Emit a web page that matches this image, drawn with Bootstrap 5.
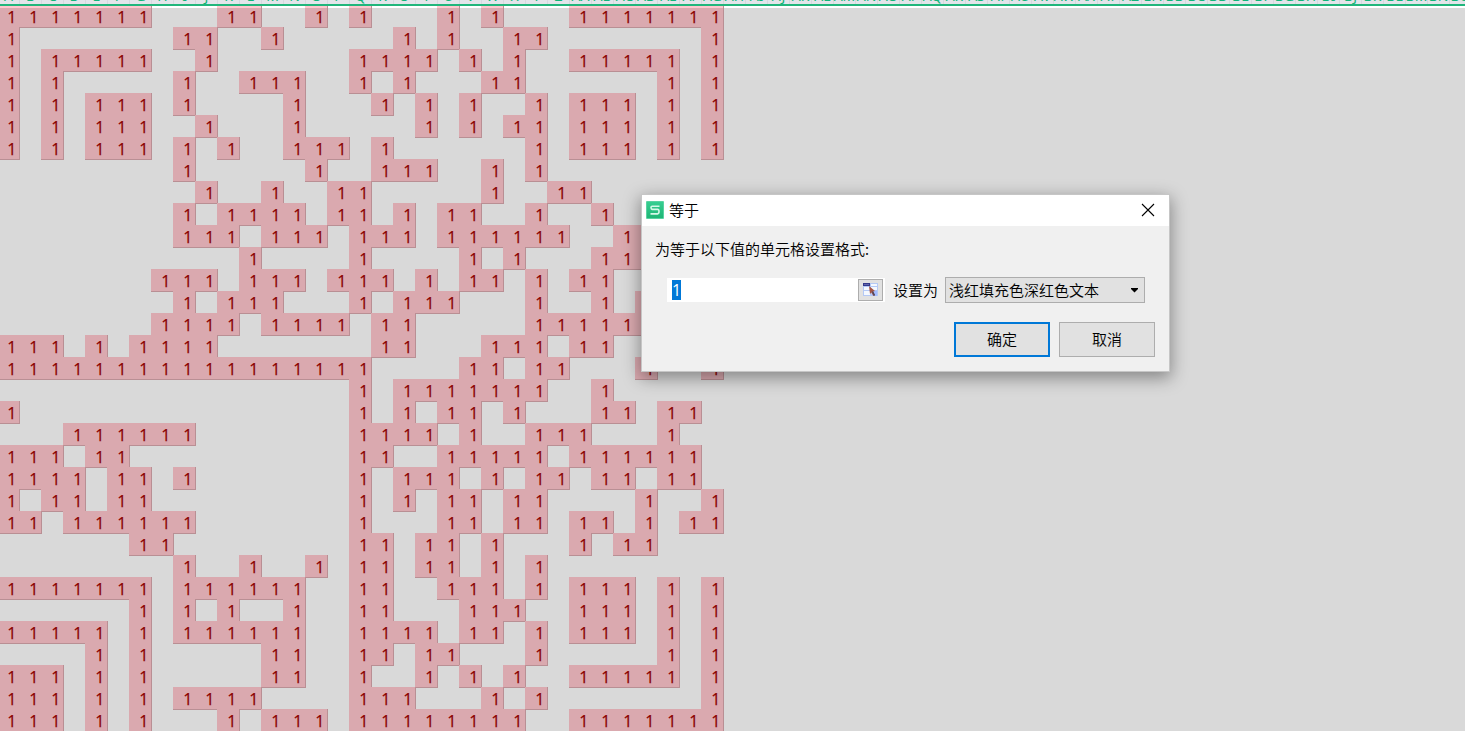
<!DOCTYPE html>
<html lang="zh-CN">
<head>
<meta charset="utf-8">
<meta name="viewport" content="width=device-width, initial-scale=1">
<title>等于</title>
<link href="https://cdn.jsdelivr.net/npm/bootstrap@5.3.0/dist/css/bootstrap.min.css" rel="stylesheet">
<style>
  body { font-family: "Noto Sans", "Noto Sans CJK SC", sans-serif; font-size: 15px; color: #000; background: #d9d9d9; }
  .col-heads { height: 6px; background: #e3e5ea; border-bottom: 2px solid #21b67c; }
  .col-heads .strip, .sheet-rows { margin-left: -2px; }
  .col-head { width: 22px; height: 4px; border-right: 1px solid #d6d9df; color: #12b57a; font-size: 14px; }
  .col-head span { line-height: 20px; margin-top: -14px; }
  .sheet-area { background: linear-gradient(#fff 2px, #d9d9d9 2px); }
  .sheet-row { height: 22px; }
  .cell-off { width: 22px; height: 22px; }
  .cell-on { width: 23px; height: 23px; margin: -1px 0 0 -1px; background: #daa9af; border: solid #b98f94; border-width: 0 1px 1px 0; color: #8b0000; line-height: 24px; padding: 0 2.5px 0 0; font-family: "Open Sans", "Noto Sans", sans-serif; font-size: 16px; -webkit-text-stroke: .25px #8b0000; }
  .sheet-row:first-child .cell-on { height: 22px; margin-top: 0; line-height: 22px; box-shadow: inset 0 2px #ffc7ce; }
  .format-dialog { left: 641px; top: 194px; width: 529px; height: 178px; background: #f0f0f0; border: 1px solid #c6c6c6; box-shadow: 0 5px 16px 1px rgba(0,0,0,.38); font-family: "Noto Sans CJK SC", sans-serif; font-weight: 350; }
  .dlg-title { height: 31px; padding: 0 14px 1px 4px; }
  .dlg-name { margin-left: 5px; }
  .dlg-label { line-height: 20px; margin: 13px 0 0 13px; }
  .value-row { height: 26px; margin: 18px 24px 0 25px; }
  .range-box { width: 218px; height: 24px; padding: 0 2px 0 5px; background: #fff; }
  .picked { background: #0078d7; color: #fff; width: 9px; height: 20px; line-height: 21px; font-family: "Open Sans", sans-serif; font-weight: 400; font-size: 16px; }
  .win-btn { background: #e1e1e1; border: 1px solid #adadad; border-radius: 0; color: #000; font-size: 15px; font-weight: 350; line-height: 1; padding: 0; }
  .pick-btn { width: 25px; height: 22px; }
  .set-as { margin: 0 7px 0 8px; line-height: 20px; }
  .format-choice { width: 200px; height: 26px; padding: 0 5px 0 3px; }
  .format-choice span { padding-bottom: 2px; }
  .act-btn { width: 96px; height: 35px; padding-bottom: 2px; }
  .act-btn.main-act { border: 2px solid #0078d7; }
  .dlg-actions { margin: 19px 14px 0 0; gap: 9px; }
</style>
<script src="https://cdn.jsdelivr.net/npm/bootstrap@5.3.0/dist/js/bootstrap.bundle.min.js"></script>
</head>
<body class="vh-100 overflow-hidden position-relative">
<div class="col-heads overflow-hidden"><div class="strip d-flex" id="heads"></div></div>
<main class="sheet-area overflow-hidden"><div class="sheet-rows" id="rows"></div></main>

<div class="format-dialog position-absolute" role="dialog" aria-label="等于">
  <div class="dlg-title bg-white d-flex align-items-center">
    <svg width="18" height="18" viewBox="0 0 18 18"><defs><linearGradient id="lg" x2="0" y2="1"><stop stop-color="#36cd91"/><stop offset="1" stop-color="#1fb575"/></linearGradient></defs><rect width="18" height="18" rx="1" fill="#59d3a2"/><rect x="1" y="1" width="16" height="16" fill="url(#lg)"/><path d="M13.5 5.2H6.2Q5 5.2 5 6.6t1.2 1.8h5.4q1.4 0 1.4 2.2t-1.4 2.3H4.5" fill="none" stroke="#d6f7e8" stroke-width="1.6"/></svg>
    <span class="dlg-name">等于</span>
    <svg class="ms-auto" width="14" height="14" viewBox="0 0 14 14"><path d="M1 1l12 12M13 1L1 13" stroke="#000" stroke-width="1.1"/></svg>
  </div>
  <div class="dlg-label">为等于以下值的单元格设置格式:</div>
  <div class="value-row d-flex align-items-center">
    <div class="range-box d-flex align-items-center justify-content-between">
      <span class="picked">1</span>
      <button class="win-btn pick-btn d-flex align-items-center justify-content-center" aria-label="选择区域">
        <svg width="15" height="14" viewBox="0 0 15 14"><rect y="0" width="15" height="13" fill="#b4c9f5"/><path d="M1 4h6v3H1zM1 8h6v4H1zM8 1h6v2H8zM8 4h6v3H8z" fill="#f4f8ff"/><path d="M9 8h5v5H9z" fill="#a5bcff"/><path d="M0 0h7v3H0z" fill="#34398b"/><path d="M1 1h5v1H1z" fill="#6368ad"/><path d="M6 3l6 5-2 .4 2 3.6-1.6 1-2-3.4L7 11z" fill="#a35445"/><path d="M9 9l2 4 1-1-2-4z" fill="#49465c"/></svg>
      </button>
    </div>
    <span class="set-as">设置为</span>
    <div class="win-btn format-choice d-flex align-items-center justify-content-between">
      <span>浅红填充色深红色文本</span>
      <svg width="9" height="5" viewBox="0 0 9 5"><path d="M1 0h7v1L4.5 4.5 1 1z"/></svg>
    </div>
  </div>
  <div class="dlg-actions d-flex justify-content-end">
    <button class="win-btn act-btn main-act">确定</button>
    <button class="win-btn act-btn">取消</button>
  </div>
</div>

<script>
  // Filled columns of each sheet row, as single columns or ranges
  const filled = [
    "0-6 10-11 14 16 20 22 26-32",
    "0 8-9 12 18 20 23-24 32",
    "0 2-6 9 16-19 21 23 26-30 32",
    "0 2 8 11-13 16 18 22-23 30 32",
    "0 2 4-6 8 13 17 19 21 24 26-28 30 32",
    "0 2 4-6 9 13 19 21 23-24 26-28 30 32",
    "0 2 4-6 8 10 13-15 17 24 26-28 30 32",
    "8 14 17-19 22 24",
    "9 12 15-16 22 25-26",
    "8 10-13 15-16 18 20-21 24 27",
    "8-10 12-14 16-18 20-25 28-29",
    "11 16 21 23 27-29",
    "7-9 11-13 15-17 19 21-22 24 26-27",
    "8 10-12 16 18-20 24 27 29",
    "7-10 12-15 17-18 24-29",
    "0-2 4 6-9 17-18 22-24 26-27",
    "0-16 21-22 24-25 29 32",
    "16 18-24 27",
    "0 16 18 20-21 23 27-28 30-31",
    "3-8 16-19 21 24-26 30",
    "0-2 4-5 16-17 20-24 26-31",
    "0-3 5-6 8 16 18-20 22 24-25 27-28 30-31",
    "0 2-3 5-6 16 18 20-21 23-24 29 32",
    "0-1 3-8 16 20-21 23-24 26-27 29 31-32",
    "6-7 16-17 19-20 22 26 28-29",
    "8 11 14 16-17 19-20 22 24",
    "0-6 8-13 16-17 20-22 24 26-28 30 32",
    "6 8 10 13 16-17 21-23 26-28 30 32",
    "0-4 6 8-13 16-19 21-22 24 26-28 30 32",
    "4 6 12-13 16-17 19-20 24 30 32",
    "0-2 4 6 12-13 16 19 21 23 26-30 32",
    "0-2 4 6 8-11 16-18 22 24 32",
    "0-2 4 6 10 12-14 16-23 26-32"
  ];
  document.getElementById("rows").innerHTML = filled.map(spec => {
    const on = new Set();
    spec.split(" ").forEach(part => {
      const [a, b = a] = part.split("-").map(Number);
      for (let c = a; c <= b; c++) on.add(c);
    });
    let cells = "";
    for (let c = 0; c < 33; c++)
      cells += on.has(c) ? '<div class="cell-on flex-shrink-0 text-end">1</div>' : '<div class="cell-off flex-shrink-0"></div>';
    return '<div class="sheet-row d-flex align-items-start">' + cells + '</div>';
  }).join("");

  let heads = "";
  for (let i = 0; i < 67; i++) {
    const name = (i > 25 ? String.fromCharCode(64 + Math.floor(i / 26)) : "") + String.fromCharCode(65 + i % 26);
    heads += '<div class="col-head flex-shrink-0 d-flex justify-content-center align-items-start"><span>' + name + '</span></div>';
  }
  document.getElementById("heads").innerHTML = heads;
</script>
</body>
</html>
